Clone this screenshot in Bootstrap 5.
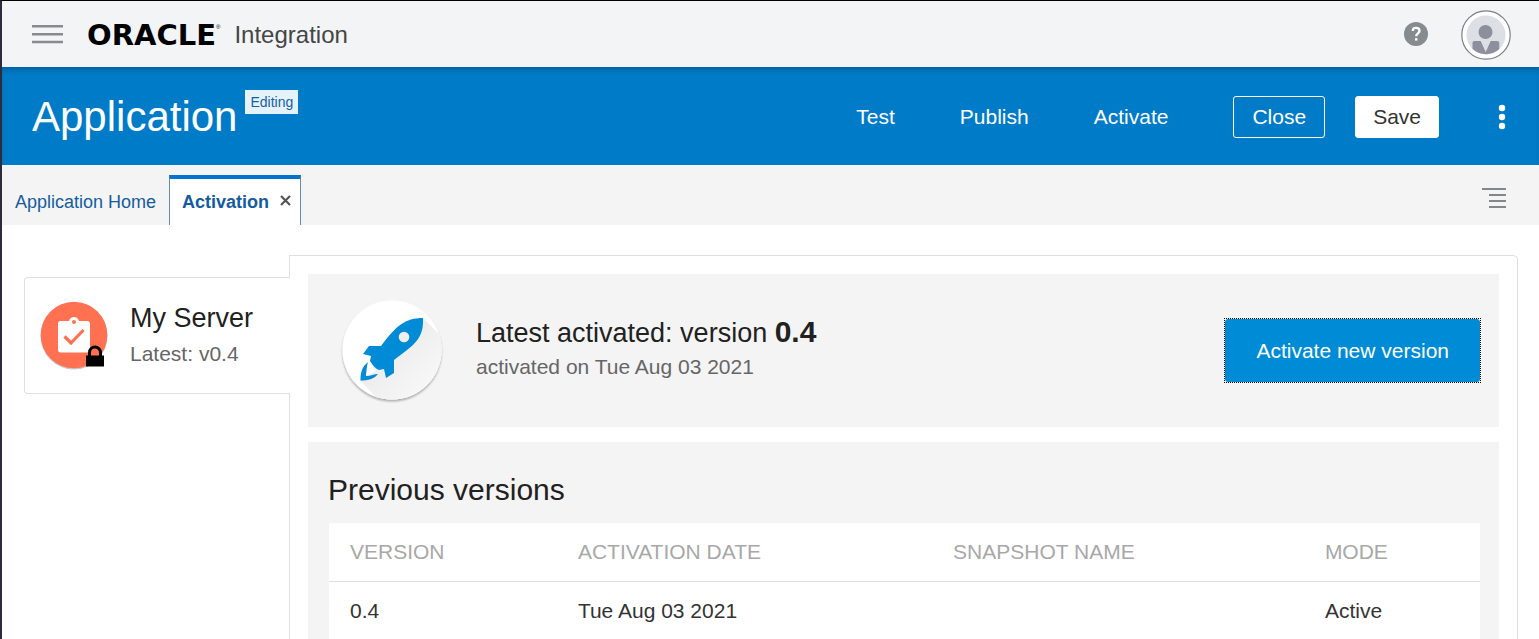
<!DOCTYPE html>
<html lang="en">
<head>
<meta charset="utf-8">
<meta name="viewport" content="width=device-width, initial-scale=1">
<title>Oracle Integration - Application</title>
<link rel="stylesheet" href="https://cdn.jsdelivr.net/npm/bootstrap@5.3.0/dist/css/bootstrap.min.css">
<style>
  body { font-family: "Liberation Sans", Arial, sans-serif; font-size: 21px; line-height: 24px; color: #212121; background: #fff; border-left: 2px solid #2b2c3d; border-top: 1px solid #000; }
  .btn { --bs-btn-font-size: 21px; --bs-btn-line-height: 24px; --bs-btn-border-radius: 3px; }
  .icon-btn { background: none; border: 0; padding: 0; display: flex; }
  .top-bar { height: 66px; background: #f2f4f6; padding: 2px 28px 0 30px; }
  .brand-word { font: bold 29px/32px "DejaVu Sans", sans-serif; color: #000; }
  .brand-reg { font-size: 6px; line-height: 8px; }
  .product { font-size: 24px; color: #454545; margin-left: 14px; }
  .app-bar { min-height: 98px; background: #007bc8; color: #fff; padding: 2px 33px 0 30px; box-shadow: inset 0 6px 6px -4px rgba(0, 50, 90, .45); }
  .app-title { font-size: 42px; line-height: 54px; }
  .state-tag { background: #e6f2fa; color: #145fa8; font-size: 14px; line-height: 24px; padding: 0 5px; }
  .actions { gap: 65px; }
  .actions a { color: #fff; text-decoration: none; }
  .finish { gap: 30px; }
  .btn-close-app { --bs-btn-color: #fff; --bs-btn-border-color: #fff; --bs-btn-padding-x: 18px; --bs-btn-padding-y: 8px; }
  .btn-save { --bs-btn-color: #333; --bs-btn-bg: #fff; --bs-btn-border-color: #fff; --bs-btn-padding-x: 17px; --bs-btn-padding-y: 8px; }
  .tab-bar { height: 60px; background: #f4f4f4; padding-right: 33px; font-size: 18px; }
  .tab-bar a { color: #145c9e; text-decoration: none; }
  .tab-plain { padding: 0 13px 11px 13px; }
  .tab-open { height: 50px; background: #fff; border: 1px solid #6a8ba3; border-top: 4px solid #0572ce; border-bottom: 0; padding: 0 9px 0 12px; gap: 11px; }
  .workspace { padding: 30px 21px 0 22px; }
  .server-tab { width: 266px; height: 117px; margin: 22px -1px 0 0; padding: 0 0 0 13px; gap: 20px; border: 1px solid #dfdfdf; border-right: 0; border-radius: 4px 0 0 4px; background: #fff; z-index: 1; }
  .server-text { padding-bottom: 4px; }
  .server-name { font-size: 27px; line-height: 32px; }
  .muted { color: #666; }
  .detail { border: 1px solid #dfdfdf; border-bottom: 0; border-radius: 0 5px 0 0; padding: 18px 18px 0; gap: 15px; min-width: 0; }
  .panel { background: #f4f4f4; }
  .latest { min-height: 153px; padding: 0 18px 0 30px; }
  .latest-text { margin-left: 30px; padding-bottom: 8px; }
  .latest-title { font-size: 27px; line-height: 36px; }
  .latest-title strong { font-size: 30px; }
  .focus-frame { border: 1px dotted #000; }
  .btn-new { --bs-btn-color: #fff; --bs-btn-bg: #008bd6; --bs-btn-border-color: #008bd6; --bs-btn-hover-color: #fff; --bs-btn-hover-bg: #007bc8; --bs-btn-padding-x: 30px; --bs-btn-padding-y: 18px; line-height: 25px; }
  .history { padding: 30px 19px 0 20px; }
  .history h2 { font-size: 30px; line-height: 36px; margin: 0 0 15px; }
  .sheet { margin-left: 1px; }
  .versions { table-layout: fixed; margin: 0; color: #333; }
  .versions th, .versions td { padding: 17px 0 17px 21px; color: #333; border-color: #e0e0e0; }
  .versions th { font-weight: 400; color: #a8a8a8; }
  .versions td { border-bottom: 0; }
</style>
</head>
<body>
<div class="d-flex flex-column min-vh-100">
  <header class="top-bar d-flex align-items-center">
    <button class="icon-btn" type="button" aria-label="Menu">
      <svg width="31" height="22" viewBox="0 0 31 22"><path d="M0 2.300h31M0 10.300h31M0 18h31" stroke="#868b8f" stroke-width="2.500"/></svg>
    </button>
    <a class="d-flex align-items-start text-decoration-none ms-4" href="#"><span class="brand-word">ORACLE</span><span class="brand-reg text-black pt-1">®</span></a>
    <span class="product">Integration</span>
    <div class="d-flex align-items-center ms-auto gap-4">
      <button class="icon-btn me-2 pb-1" type="button" aria-label="Help">
        <svg width="25" height="25" viewBox="0 0 25 25"><g transform="translate(0 1)"><circle cx="12" cy="12" r="12" fill="#858b8e"/><path d="M8.700 9C8.700 6.800 10.100 5.800 12 5.800s3.500 1.100 3.500 3c0 2.400-3.300 2.600-3.300 5.400" fill="none" stroke="#fff" stroke-width="2.300"/><path d="M11 16.200h2.400v2.400H11z" fill="#fff"/></g></svg>
      </button>
      <button class="icon-btn" type="button" aria-label="Account">
        <svg width="50" height="50" viewBox="0 0 50 50"><circle cx="25" cy="25" r="24.200" fill="#fff" stroke="#7d8083" stroke-width="1.200"/><circle cx="25" cy="25" r="19.500" fill="#dce0e4"/><circle cx="24.500" cy="22" r="7" fill="#8d8f9d"/><path d="M11.500 39v-6q0-2 2-2h6.200l5 11 5-11H36q2.300 0 2.300 2v6Q33 44 25 44.300 17 44 11.500 39z" fill="#8d8f9d"/></svg>
      </button>
    </div>
  </header>

  <section class="app-bar d-flex align-items-center">
    <div class="d-flex align-items-start gap-2">
      <h1 class="app-title fw-normal m-0">Application</h1>
      <span class="state-tag">Editing</span>
    </div>
    <nav class="actions d-flex align-items-center ms-auto" aria-label="Application actions">
      <a href="#">Test</a>
      <a href="#">Publish</a>
      <a href="#">Activate</a>
      <div class="finish d-flex align-items-center">
        <button class="btn btn-close-app" type="button">Close</button>
        <button class="btn btn-save" type="button">Save</button>
      </div>
    </nav>
    <button class="icon-btn ms-5 ps-2" type="button" aria-label="More actions">
      <svg width="11" height="26" viewBox="0 0 11 26" fill="#fff"><circle cx="7" cy="4" r="3.200"/><circle cx="7" cy="13" r="3.200"/><circle cx="7" cy="22" r="3.200"/></svg>
    </button>
  </section>

  <nav class="tab-bar d-flex align-items-end" aria-label="Open tabs">
    <a class="tab-plain" href="#">Application Home</a>
    <div class="tab-open d-flex align-items-center">
      <a class="fw-bold" href="#" aria-current="page">Activation</a>
      <button class="icon-btn pb-1" type="button" aria-label="Close tab">
        <svg width="11" height="12" viewBox="0 0 11 12"><path d="M1 2l9 9M10 2l-9 9" stroke="#555" stroke-width="2.200"/></svg>
      </button>
    </div>
    <button class="icon-btn ms-auto pb-3" type="button" aria-label="Tab list">
      <svg width="24" height="22" viewBox="0 0 24 22"><path d="M0 2h24M7 8h17M7 14h17M7 20h17" stroke="#82878a" stroke-width="2"/></svg>
    </button>
  </nav>

  <main class="workspace d-flex flex-grow-1">
    <a class="server-tab d-flex align-items-center flex-shrink-0 position-relative text-reset text-decoration-none" href="#">
      <svg width="72" height="74" viewBox="0 0 72 74">
        <circle cx="36" cy="37" r="33.500" fill="#888" opacity=".45"/>
        <circle cx="36" cy="36" r="33.300" fill="#ff7150"/>
        <path d="M22.500 22H31c.8-2.900 2.600-4 5-4s4.200 1.100 5 4h8q3 0 3 3v25.500q0 3-3 3H22.500q-2.500 0-2.500-3V25q0-3 2.500-3z" fill="#fff"/>
        <circle cx="36" cy="23" r="2" fill="#ff7150"/>
        <path d="M26.500 37.500l6.500 6.500L45.500 31" fill="none" stroke="#ff7150" stroke-width="3.200"/>
        <path d="M48 56.500h18v11H48z"/><path d="M51.500 58v-4.500a5.500 5.500 0 0 1 11 0V58" fill="none" stroke="#000" stroke-width="3"/>
      </svg>
      <div class="server-text">
        <div class="server-name">My Server</div>
        <div class="muted mt-2">Latest: v0.4</div>
      </div>
    </a>

    <div class="detail d-flex flex-column flex-grow-1">
      <section class="panel latest d-flex align-items-center">
        <svg width="108" height="108" viewBox="0 0 108 108" class="flex-shrink-0">
          <defs>
            <linearGradient id="fold" x1="0" y1="0" x2="1" y2="1"><stop offset=".3" stop-color="#ebebeb"/><stop offset=".8" stop-color="#f8f8f8"/></linearGradient>
            <clipPath id="disc"><circle cx="54" cy="53" r="49.500"/></clipPath>
            <filter id="lift" x="-10%" y="-10%" width="120%" height="120%"><feDropShadow dx="0" dy="2" stdDeviation="1" flood-color="#000" flood-opacity=".3"/></filter>
          </defs>
          <circle cx="54" cy="53" r="49.500" fill="#fff" filter="url(#lift)"/>
          <path d="M85 21l25 25v64H47L22 83z" fill="url(#fold)" clip-path="url(#disc)"/>
          <path d="M85 21C67 21 58 29 43 49H31l-6 8 8 2-1 5q5 8 9 9l5-1 2 9 8-5V63C76 48 86 42 85 21z" fill="#008bd6"/>
          <circle cx="66" cy="40" r="5.300" fill="#eee"/>
          <path d="M30 65C24 70 22.500 75 22.500 83.500 30 83.500 36 82 40 77c-4 0-7 2-12 2 .5-5 .5-9 2-14z" fill="#008bd6"/>
          <path d="M31 66l-3 13 10-5z" fill="#fff"/>
        </svg>
        <div class="latest-text">
          <div class="latest-title">Latest activated: version <strong>0.4</strong></div>
          <div class="muted mt-1">activated on Tue Aug 03 2021</div>
        </div>
        <div class="focus-frame d-flex ms-auto">
          <button class="btn btn-new" type="button">Activate new version</button>
        </div>
      </section>

      <section class="panel history d-flex flex-column flex-grow-1">
        <h2 class="fw-normal">Previous versions</h2>
        <div class="sheet bg-white flex-grow-1">
          <table class="table versions">
            <colgroup><col style="width:19.8%"><col style="width:32.6%"><col style="width:32.3%"><col style="width:15.3%"></colgroup>
            <thead><tr><th scope="col">VERSION</th><th scope="col">ACTIVATION DATE</th><th scope="col">SNAPSHOT NAME</th><th scope="col">MODE</th></tr></thead>
            <tbody><tr><td>0.4</td><td>Tue Aug 03 2021</td><td></td><td>Active</td></tr></tbody>
          </table>
        </div>
      </section>
    </div>
  </main>
</div>
<script src="https://cdn.jsdelivr.net/npm/bootstrap@5.3.0/dist/js/bootstrap.bundle.min.js"></script>
</body>
</html>
